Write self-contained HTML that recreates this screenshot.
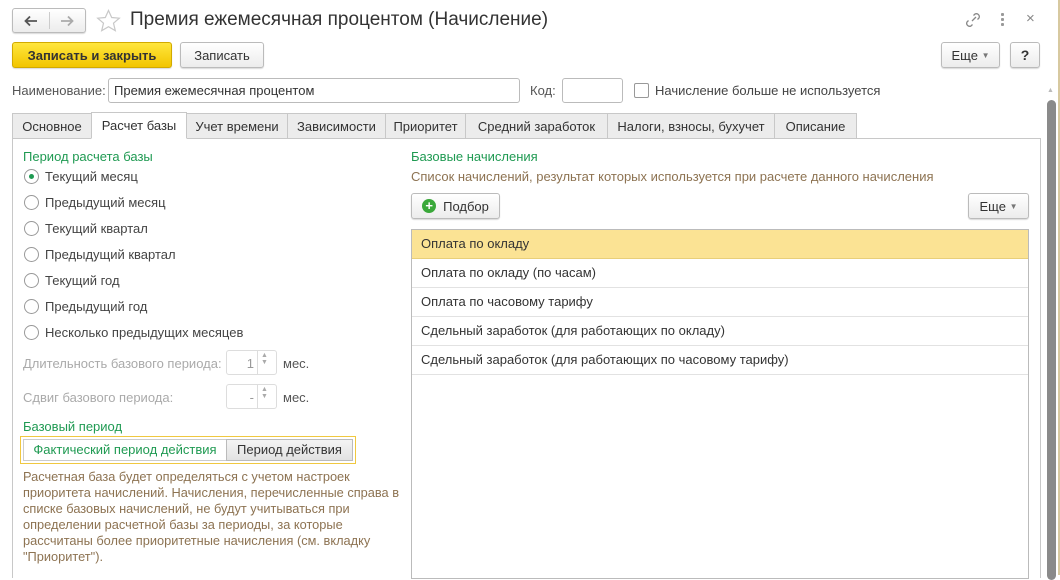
<!DOCTYPE html>
<html><head><meta charset="utf-8"><style>
*{box-sizing:border-box;margin:0;padding:0}
body{width:1060px;height:575px;overflow:hidden;background:#fff;font-family:"Liberation Sans",Arial,sans-serif;font-size:13px;color:#333;position:relative}
.a{position:absolute;white-space:nowrap}
.btn{position:absolute;border:1px solid #bbb;border-radius:3px;background:linear-gradient(#fff,#ececec);box-shadow:0 1px 1px rgba(0,0,0,.15);display:flex;align-items:center;justify-content:center;color:#333}
.inp{position:absolute;border:1px solid #bbb;border-radius:3px;background:#fff}
.tab{position:absolute;top:113px;height:26px;border:1px solid #c8c8c8;background:#ececec;display:flex;align-items:center;justify-content:center;color:#333}
.green{color:#1f9a52}
.tan{color:#8d7352}
.rad{position:absolute;left:24px;width:15px;height:15px;border:1px solid #999;border-radius:50%;background:#fff}
.rt{position:absolute;left:45px;color:#444}
.row{position:absolute;left:412px;width:616px;height:29px;border-bottom:1px solid #e2e2e2;padding-left:9px;line-height:28px;color:#333}
</style></head><body>
<div class="btn" style="left:12px;top:8px;width:74px;height:25px;justify-content:space-around">
<svg width="14" height="12"><path d="M13 6H2M6 1.5L1.5 6 6 10.5" stroke="#555" stroke-width="1.8" fill="none"/></svg>
<span style="position:absolute;left:36px;top:3px;height:17px;border-left:1px solid #ccc"></span>
<svg width="14" height="12"><path d="M1 6h11M8 1.5L12.5 6 8 10.5" stroke="#aaa" stroke-width="1.8" fill="none"/></svg>
</div>
<svg class="a" style="left:96px;top:9px" width="25" height="24"><path d="M12.5 1.5l3.2 7 7.6.7-5.8 5 1.8 7.5-6.8-4-6.8 4 1.8-7.5-5.8-5 7.6-.7z" fill="none" stroke="#c8c8c8" stroke-width="1.2"/></svg>
<div class="a" style="left:130px;top:9px;font-size:19px;color:#333">Премия ежемесячная процентом (Начисление)</div>
<svg class="a" style="left:964px;top:11px" width="18" height="18"><path d="M8 10l4-4M9.5 4.5l1.5-1.5a3 3 0 0 1 4 4l-1.5 1.5M8.5 13.5L7 15a3 3 0 0 1-4-4l1.5-1.5" stroke="#888" stroke-width="1.3" fill="none"/></svg>
<div class="a" style="left:1001px;top:13px;width:3px;height:3px;background:#999;box-shadow:0 5px #999,0 10px #999;border-radius:1px"></div>
<div class="a" style="left:1026px;top:10px;color:#888;font-size:15px">×</div>
<div class="btn" style="left:12px;top:42px;width:160px;height:26px;background:linear-gradient(#ffe63d,#f2c500);border-color:#d2aa00;font-weight:bold;color:#333">Записать и закрыть</div>
<div class="btn" style="left:180px;top:42px;width:84px;height:26px">Записать</div>
<div class="btn" style="left:941px;top:42px;width:59px;height:26px">Еще&nbsp;<span style="font-size:8px;color:#777">▼</span></div>
<div class="btn" style="left:1010px;top:42px;width:30px;height:26px;font-weight:bold;font-size:14px">?</div>
<div class="a" style="left:12px;top:83px;color:#555">Наименование:</div>
<div class="inp" style="left:108px;top:78px;width:412px;height:25px;padding:4px 5px">Премия ежемесячная процентом</div>
<div class="a" style="left:530px;top:83px;color:#555">Код:</div>
<div class="inp" style="left:562px;top:78px;width:61px;height:25px"></div>
<div class="a" style="left:634px;top:83px;width:15px;height:15px;border:1px solid #999;border-radius:2px"></div>
<div class="a" style="left:655px;top:83px;color:#444">Начисление больше не используется</div>
<div class="a" style="left:1047px;top:87px;font-size:7px;color:#bbb">▲</div>
<div class="a" style="left:1047px;top:100px;width:9px;height:480px;background:#8a8a8a;border-radius:5px"></div>
<div class="a" style="left:1058px;top:0;width:2px;height:575px;background:#d7c9a0"></div>
<div class="tab" style="left:12px;width:80px">Основное</div>
<div class="tab" style="left:91px;width:96px;background:#fff;border-bottom-color:#fff;top:112px;height:27px;z-index:2">Расчет базы</div>
<div class="tab" style="left:186px;width:102px">Учет времени</div>
<div class="tab" style="left:287px;width:99px">Зависимости</div>
<div class="tab" style="left:385px;width:81px">Приоритет</div>
<div class="tab" style="left:465px;width:143px">Средний заработок</div>
<div class="tab" style="left:607px;width:168px">Налоги, взносы, бухучет</div>
<div class="tab" style="left:774px;width:83px">Описание</div>
<div class="a" style="left:12px;top:138px;width:1029px;height:440px;border-left:1px solid #c8c8c8;border-top:1px solid #c8c8c8;border-right:1px solid #c8c8c8"></div>
<div class="a green" style="left:23px;top:149px">Период расчета базы</div>
<div class="rad" style="top:169px"><div style="width:5px;height:5px;background:#1f9a52;border-radius:50%;margin:4px"></div></div>
<div class="rt" style="top:169px">Текущий месяц</div>
<div class="rad" style="top:195px"></div><div class="rt" style="top:195px">Предыдущий месяц</div>
<div class="rad" style="top:221px"></div><div class="rt" style="top:221px">Текущий квартал</div>
<div class="rad" style="top:247px"></div><div class="rt" style="top:247px">Предыдущий квартал</div>
<div class="rad" style="top:273px"></div><div class="rt" style="top:273px">Текущий год</div>
<div class="rad" style="top:299px"></div><div class="rt" style="top:299px">Предыдущий год</div>
<div class="rad" style="top:325px"></div><div class="rt" style="top:325px">Несколько предыдущих месяцев</div>
<div class="a" style="left:23px;top:356px;color:#aaa">Длительность базового периода:</div>
<div class="inp" style="left:226px;top:350px;width:51px;height:25px;border-color:#ddd"><span style="position:absolute;right:22px;top:5px;color:#999">1</span><span style="position:absolute;left:30px;top:0;height:23px;border-left:1px solid #ddd"></span><span style="position:absolute;left:34px;top:1px;font-size:7px;color:#aaa">▲<br>▼</span></div>
<div class="a" style="left:283px;top:356px;color:#555">мес.</div>
<div class="a" style="left:23px;top:390px;color:#aaa">Сдвиг базового периода:</div>
<div class="inp" style="left:226px;top:384px;width:51px;height:25px;border-color:#ddd"><span style="position:absolute;right:22px;top:5px;color:#999">-</span><span style="position:absolute;left:30px;top:0;height:23px;border-left:1px solid #ddd"></span><span style="position:absolute;left:34px;top:1px;font-size:7px;color:#aaa">▲<br>▼</span></div>
<div class="a" style="left:283px;top:390px;color:#555">мес.</div>
<div class="a green" style="left:23px;top:419px">Базовый период</div>
<div class="a" style="left:20px;top:436px;width:336px;height:28px;border:1px solid #f0c840"></div>
<div class="a" style="left:23px;top:439px;width:204px;height:22px;border:1px solid #ccc;background:#fff;text-align:center;line-height:20px;color:#1f9a52">Фактический период действия</div>
<div class="a" style="left:226px;top:439px;width:127px;height:22px;border:1px solid #bbb;background:linear-gradient(#f4f4f4,#e2e2e2);text-align:center;line-height:20px;color:#333">Период действия</div>
<div class="a tan" style="left:23px;top:469px;line-height:16px;font-size:12.8px;white-space:normal;width:385px">Расчетная база будет определяться с учетом настроек<br>приоритета начислений. Начисления, перечисленные справа в<br>списке базовых начислений, не будут учитываться при<br>определении расчетной базы за периоды, за которые<br>рассчитаны более приоритетные начисления (см. вкладку<br>"Приоритет").</div>
<div class="a green" style="left:411px;top:149px">Базовые начисления</div>
<div class="a tan" style="left:411px;top:169px">Список начислений, результат которых используется при расчете данного начисления</div>
<div class="btn" style="left:411px;top:193px;width:89px;height:26px"><span style="display:inline-block;width:14px;height:14px;border-radius:50%;background:#3aa83a;color:#fff;font-weight:bold;font-size:13px;line-height:14px;text-align:center;margin-right:7px">+</span>Подбор</div>
<div class="btn" style="left:968px;top:193px;width:61px;height:26px">Еще&nbsp;<span style="font-size:8px;color:#777">▼</span></div>
<div class="a" style="left:411px;top:229px;width:618px;height:350px;border:1px solid #bbb"></div>
<div class="row" style="top:230px;background:#fbe394;border-bottom-color:#e8cf7a">Оплата по окладу</div>
<div class="row" style="top:259px">Оплата по окладу (по часам)</div>
<div class="row" style="top:288px">Оплата по часовому тарифу</div>
<div class="row" style="top:317px">Сдельный заработок (для работающих по окладу)</div>
<div class="row" style="top:346px">Сдельный заработок (для работающих по часовому тарифу)</div>
</body></html>
